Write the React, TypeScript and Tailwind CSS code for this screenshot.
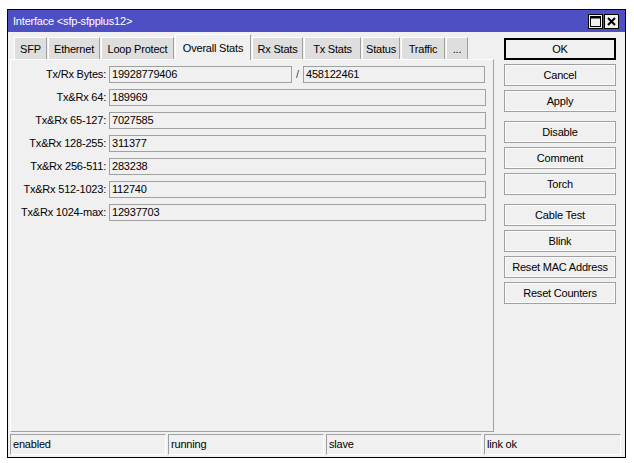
const tabs = [
  { label: "SFP", w: "w-[33px]" },
  { label: "Ethernet", w: "w-[52px]" },
  { label: "Loop Protect", w: "w-[73px]" },
  { label: "Overall Stats", w: "w-[76px]", active: true },
  { label: "Rx Stats", w: "w-[51px]" },
  { label: "Tx Stats", w: "w-[57px]" },
  { label: "Status", w: "w-[38px]" },
  { label: "Traffic", w: "w-[44px]" },
  { label: "...", w: "w-[22px]" },
]

const rows = [
  { label: "Tx&Rx 64:", value: "189969" },
  { label: "Tx&Rx 65-127:", value: "7027585" },
  { label: "Tx&Rx 128-255:", value: "311377" },
  { label: "Tx&Rx 256-511:", value: "283238" },
  { label: "Tx&Rx 512-1023:", value: "112740" },
  { label: "Tx&Rx 1024-max:", value: "12937703" },
]

const buttonGroups = [
  ["OK", "Cancel", "Apply"],
  ["Disable", "Comment", "Torch"],
  ["Cable Test", "Blink", "Reset MAC Address", "Reset Counters"],
]

const status = ["enabled", "running", "slave", "link ok"]

function Field({ value, className }: { value: string; className: string }) {
  return (
    <div className={`h-[17px] border border-[#a0a0a0] bg-[#f0f0f0] pl-[2px] leading-[15px] ${className}`}>
      {value}
    </div>
  )
}

function Button({ label }: { label: string }) {
  const isDefault = label === "OK"
  return (
    <div
      className={`flex h-[22px] w-[112px] items-center justify-center bg-[#f0f0f0] ${
        isDefault
          ? "border border-black shadow-[inset_0_0_0_1px_#000]"
          : "border border-[#a0a0a0] shadow-[inset_0_0_0_1px_#fcfcfc]"
      }`}
    >
      {label}
    </div>
  )
}

export default function App() {
  return (
    <div
      className="h-[463px] w-[634px] bg-white pl-[7px] pt-[9px] text-[11px] tracking-[-0.2px] text-black"
      style={{ fontFamily: '"Liberation Sans", Arial, sans-serif' }}
    >
      <div className="flex h-[449px] w-[619px] flex-col border border-black bg-[#f0f0f0]">
        {/* title bar */}
        <div className="flex h-[22px] items-center justify-between bg-[#4f4fc4] pl-[5px] pr-[6px] text-white">
          <span>Interface &lt;sfp-sfpplus12&gt;</span>
          <div className="flex gap-[1px]">
            <div className="flex h-[15px] w-[15px] items-center justify-center border border-black bg-[#f0f0f0]">
              <svg width="11" height="11" viewBox="0 0 11 11">
                <rect x="0.5" y="0.5" width="10" height="10" fill="none" stroke="#000" />
                <rect x="0.5" y="0.5" width="10" height="2" fill="#000" />
              </svg>
            </div>
            <div className="flex h-[15px] w-[15px] items-center justify-center border border-black bg-[#f0f0f0]">
              <svg width="9" height="9" viewBox="0 0 9 9">
                <path d="M1 1 L8 8 M8 1 L1 8" stroke="#000" strokeWidth="2" />
              </svg>
            </div>
          </div>
        </div>

        <div className="flex flex-1">
          {/* left side: tabs + panel */}
          <div className="ml-[2px] flex w-[484px] flex-col">
            <div className="flex h-[27px] items-end pl-[4px]">
              {tabs.map((t) =>
                t.active ? (
                  <div
                    key={t.label}
                    className={`relative z-10 -mb-[1px] mr-[1px] flex h-[26px] items-start justify-center border-l border-t border-r border-l-white border-t-white border-r-[#a0a0a0] bg-[#f0f0f0] pt-[5px] ${t.w}`}
                  >
                    {t.label}
                  </div>
                ) : (
                  <div
                    key={t.label}
                    className={`mr-[1px] flex h-[22px] items-center justify-center border-l border-t border-r border-l-white border-t-white border-r-[#a0a0a0] bg-[#dedede] pt-[1px] ${t.w}`}
                  >
                    {t.label}
                  </div>
                )
              )}
            </div>
            <div className="flex h-[373px] flex-col gap-[6px] border-b border-l border-r border-t border-b-[#a0a0a0] border-l-white border-r-[#a0a0a0] border-t-white pt-[6px]">
              <div className="flex items-center">
                <div className="w-[95px] text-right">Tx/Rx Bytes:</div>
                <Field value="19928779406" className="ml-[3px] w-[183px]" />
                <span className="w-[11px] text-center text-[#444]">/</span>
                <Field value="458122461" className="w-[182px]" />
              </div>
              {rows.map((r) => (
                <div key={r.label} className="flex items-center">
                  <div className="w-[95px] text-right">{r.label}</div>
                  <Field value={r.value} className="ml-[3px] w-[377px]" />
                </div>
              ))}
            </div>
          </div>

          {/* right side: buttons */}
          <div className="ml-[10px] mt-[6px] flex flex-col gap-[9px]">
            {buttonGroups.map((g, i) => (
              <div key={i} className="flex flex-col gap-[4px]">
                {g.map((b) => (
                  <Button key={b} label={b} />
                ))}
              </div>
            ))}
          </div>
        </div>

        {/* status bar */}
        <div className="mb-[2px] ml-[2px] flex gap-[2px]">
          {status.map((s, i) => (
            <div
              key={s}
              className={`flex h-[21px] items-center border-l border-t border-b border-r border-l-[#a0a0a0] border-t-[#a0a0a0] border-b-white border-r-white pl-[2px] ${
                i === 3 ? "w-[137px]" : "w-[156px]"
              }`}
            >
              {s}
            </div>
          ))}
        </div>
      </div>
    </div>
  )
}
